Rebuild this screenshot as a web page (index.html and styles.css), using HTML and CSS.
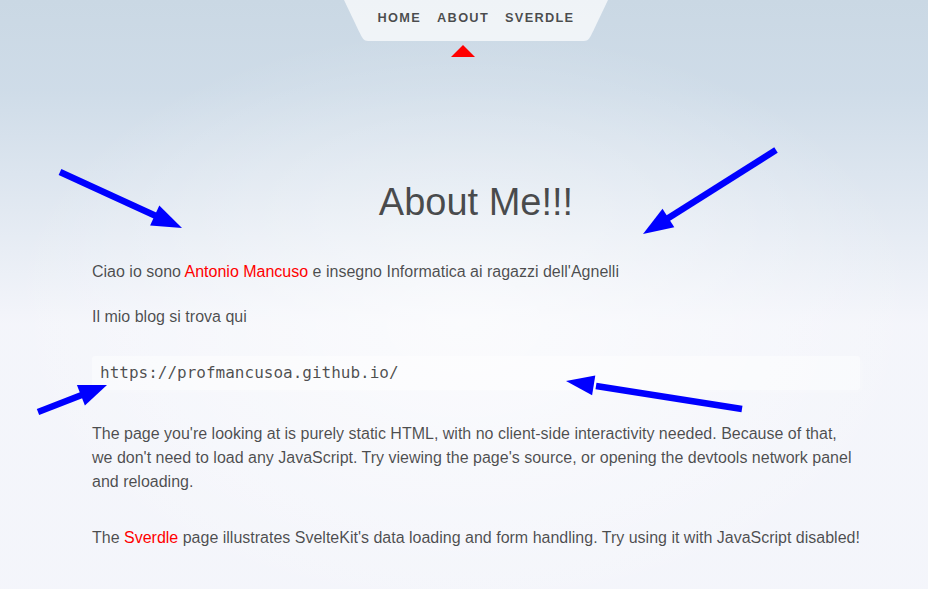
FILE: index.html
```html
<!DOCTYPE html>
<html lang="it">
<head>
<meta charset="utf-8">
<title>About</title>
<link rel="stylesheet" href="styles.css">
</head>
<body>
<div class="app">
  <header class="header">
    <nav class="nav">
      <svg class="nav-edge" viewBox="0 0 2 3" preserveAspectRatio="none" aria-hidden="true"><path d="M0,0 L1,2 C1.5,3 1.5,3 2,3 L2,0 Z"/></svg>
      <ul class="nav-list">
        <li class="nav-item"><a class="nav-link" href="#">Home</a></li>
        <li class="nav-item current"><a class="nav-link" href="#">About</a></li>
        <li class="nav-item"><a class="nav-link" href="#">Sverdle</a></li>
      </ul>
      <svg class="nav-edge" viewBox="0 0 2 3" preserveAspectRatio="none" aria-hidden="true"><path d="M0,0 L0,3 C0.5,3 0.5,3 1,2 L2,0 Z"/></svg>
    </nav>
  </header>
  <main class="main">
    <div class="text-column">
      <h1 class="title">About Me!!!</h1>
      <p class="intro">Ciao io sono <a class="link" href="#">Antonio Mancuso</a> e insegno Informatica ai ragazzi dell'Agnelli</p>
      <p class="blog">Il mio blog si trova qui</p>
      <pre class="code">https://profmancusoa.github.io/</pre>
      <p class="static">The page you're looking at is purely static HTML, with no client-side interactivity needed. Because of that, we don't need to load any JavaScript. Try viewing the page's source, or opening the devtools network panel and reloading.</p>
      <p class="sverdle">The <a class="link" href="#">Sverdle</a> page illustrates SvelteKit's data loading and form handling. Try using it with JavaScript disabled!</p>
    </div>
  </main>
</div>
<svg class="arrows" width="928" height="589" viewBox="0 0 928 589" aria-hidden="true">
  <g class="arrow-shafts">
    <line x1="60" y1="172" x2="156" y2="216"/>
    <line x1="776" y1="150" x2="666" y2="219.5"/>
    <line x1="38" y1="412" x2="83" y2="394.5"/>
    <line x1="742" y1="409" x2="596" y2="386"/>
  </g>
  <g class="arrow-heads">
    <polygon points="182,228 150.1,225.5 159.3,205.5"/>
    <polygon points="643,234 662.5,208.7 674.3,227.3"/>
    <polygon points="107,385 84.9,405.4 76.9,385"/>
    <polygon points="566,381 595.3,375.5 592.1,395.3"/>
  </g>
</svg>
</body>
</html>
```

FILE: styles.css
```css
:root {
  --color-bg-0: rgb(202, 216, 228);
  --color-bg-1: hsl(209, 36%, 86%);
  --color-bg-2: hsl(228, 45%, 97%);
  --color-theme-1: #ff0000;
  --color-text: rgba(0, 0, 0, 0.7);
  --font-body: "Liberation Sans", Arial, sans-serif;
  --font-mono: "DejaVu Sans Mono", monospace;
}

html, body {
  margin: 0;
  padding: 0;
}

body {
  min-height: 100vh;
  font-family: var(--font-body);
  font-size: 16px;
  color: var(--color-text);
  background-color: var(--color-bg-1);
  background-size: 100vw 100vh;
  background-attachment: fixed;
  background-image:
    radial-gradient(50% 50% at 50% 55%, rgba(255, 255, 255, 0.6) 0%, rgba(255, 255, 255, 0) 100%),
    linear-gradient(180deg, var(--color-bg-0) 0%, var(--color-bg-1) 15%, var(--color-bg-2) 55%);
  overflow: hidden;
}

.app {
  display: flex;
  flex-direction: column;
  min-height: 100vh;
  padding-left: 24px;
  box-sizing: border-box;
}

.header {
  display: flex;
  justify-content: center;
}

.nav {
  display: flex;
  justify-content: center;
  --background: rgba(255, 255, 255, 0.7);
}

.nav-edge {
  display: block;
  width: 26px;
  height: 41px;
}

.nav-edge path {
  fill: var(--background);
}

.nav-list {
  position: relative;
  display: flex;
  justify-content: center;
  align-items: center;
  height: 41px;
  margin: 0;
  padding: 0;
  list-style: none;
  background: var(--background);
}

.nav-item {
  position: relative;
  height: 100%;
}

.nav-item.current::after {
  content: "";
  position: absolute;
  top: calc(100% + 4px);
  left: calc(50% - 12px);
  width: 0;
  height: 0;
  border-left: 12px solid transparent;
  border-right: 12px solid transparent;
  border-bottom: 12px solid var(--color-theme-1);
}

.nav-link {
  display: flex;
  height: 100%;
  box-sizing: border-box;
  align-items: center;
  padding: 0 8px 7px;
  color: var(--color-text);
  font-weight: 700;
  font-size: 12.8px;
  text-transform: uppercase;
  letter-spacing: 0.1em;
  text-decoration: none;
}

.main {
  display: flex;
  flex-direction: column;
  padding-top: 139px;
}

.text-column {
  display: flex;
  flex-direction: column;
  width: 768px;
  margin: 0 auto;
}

.title {
  margin: 0 0 36px;
  font-size: 38px;
  font-weight: 400;
  line-height: 44px;
  text-align: center;
}

.text-column p {
  margin: 0;
  line-height: 24px;
}

.text-column .blog {
  margin-top: 21px;
}

.text-column .static {
  margin-top: 32px;
}

.text-column .sverdle {
  margin-top: 32px;
}

.link {
  color: var(--color-theme-1);
  text-decoration: none;
}

.code {
  margin: 27px 0 0;
  padding: 8px;
  font-family: var(--font-mono);
  font-size: 16px;
  line-height: 18px;
  color: var(--color-text);
  background-color: rgba(255, 255, 255, 0.45);
  border-radius: 3px;
  box-shadow: 2px 2px 6px rgba(255, 255, 255, 0.25);
}

.arrows {
  position: absolute;
  top: 0;
  left: 0;
  pointer-events: none;
}

.arrow-shafts line {
  stroke: #0000ff;
  stroke-width: 6.5;
}

.arrow-heads polygon {
  fill: #0000ff;
}
```
